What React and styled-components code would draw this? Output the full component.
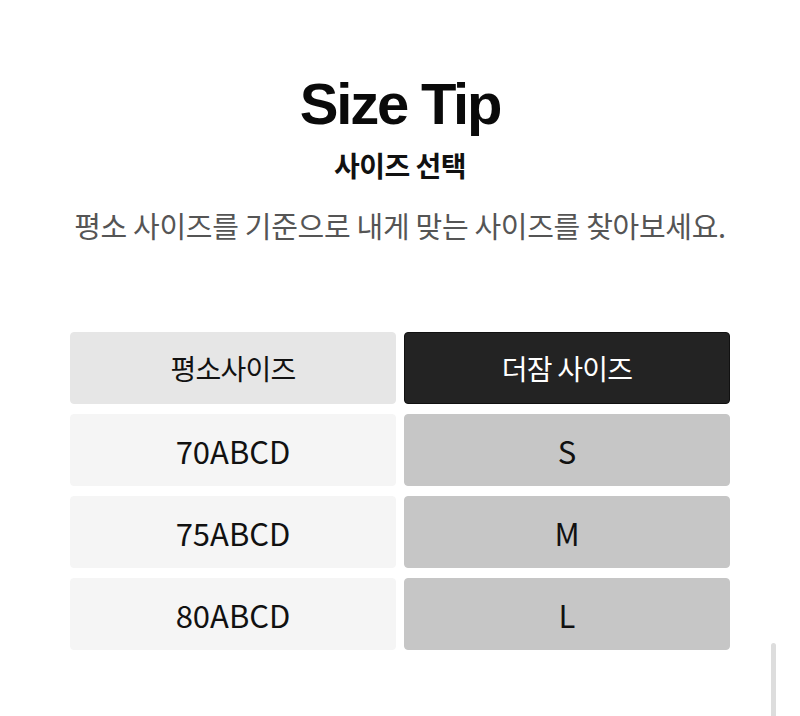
import React from "react";
import styled, { createGlobalStyle } from "styled-components";

const GlobalStyle = createGlobalStyle`
  html, body {
    margin: 0;
    padding: 0;
    background: #ffffff;
  }
  body {
    font-family: "Noto Sans CJK KR", "Noto Sans", sans-serif;
    color: #111111;
  }
`;

const rows = [
  { base: "70ABCD", size: "S" },
  { base: "75ABCD", size: "M" },
  { base: "80ABCD", size: "L" },
];

function App() {
  return (
    <>
      <GlobalStyle />
      <Page>
        <Title>Size Tip</Title>
        <SubTitle>사이즈 선택</SubTitle>
        <Desc>평소 사이즈를 기준으로 내게 맞는 사이즈를 찾아보세요.</Desc>
        <Table>
          <Cell $kind="headLeft">평소사이즈</Cell>
          <Cell $kind="headRight">더잠 사이즈</Cell>
          {rows.map((row) => (
            <React.Fragment key={row.base}>
              <Cell $kind="left" $latin>
                {row.base}
              </Cell>
              <Cell $kind="right" $latin>
                {row.size}
              </Cell>
            </React.Fragment>
          ))}
        </Table>
        <ScrollThumb />
      </Page>
    </>
  );
}

export default App;

const Page = styled.div`
  position: relative;
  width: 800px;
  height: 716px;
  overflow: hidden;
  padding-top: 71px;
  box-sizing: border-box;
  display: flex;
  flex-direction: column;
  align-items: center;
`;

const Title = styled.h1`
  margin: 0;
  font-family: "Liberation Sans", Arial, sans-serif;
  font-weight: 700;
  font-size: 58px;
  line-height: 66px;
  letter-spacing: -2.2px;
  color: #0a0a0a;
`;

const SubTitle = styled.h2`
  margin: 8px 0 0;
  font-weight: 700;
  font-size: 28px;
  line-height: 40px;
  letter-spacing: -0.5px;
  color: #111111;
`;

const Desc = styled.p`
  margin: 20px 0 0;
  font-size: 29px;
  line-height: 40px;
  letter-spacing: -0.3px;
  color: #555555;
`;

const Table = styled.div`
  margin-top: 87px;
  width: 660px;
  display: grid;
  grid-template-columns: 1fr 1fr;
  column-gap: 8px;
  row-gap: 10px;
`;

const cellColors = {
  headLeft: { bg: "#e6e6e6", fg: "#111111", border: "#e6e6e6" },
  headRight: { bg: "#232323", fg: "#ffffff", border: "#111111" },
  left: { bg: "#f5f5f5", fg: "#111111", border: "#f5f5f5" },
  right: { bg: "#c6c6c6", fg: "#111111", border: "#c6c6c6" },
};

const Cell = styled.div`
  height: 72px;
  box-sizing: border-box;
  border-radius: 4px;
  border: 1px solid ${(p) => cellColors[p.$kind].border};
  background: ${(p) => cellColors[p.$kind].bg};
  color: ${(p) => cellColors[p.$kind].fg};
  display: flex;
  align-items: center;
  justify-content: center;
  font-size: ${(p) => (p.$latin ? "31px" : "28px")};
  letter-spacing: ${(p) => (p.$latin ? "0" : "-0.8px")};
  font-weight: 400;
`;

const ScrollThumb = styled.div`
  position: absolute;
  left: 771px;
  top: 643px;
  width: 5px;
  height: 90px;
  border-radius: 3px;
  background: #dddddd;
`;
